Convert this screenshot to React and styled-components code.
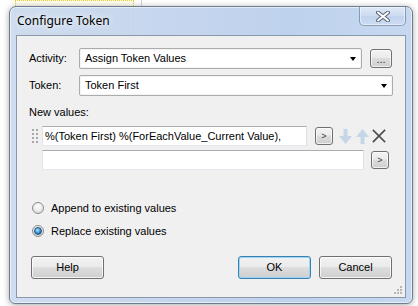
import React from 'react';
import styled, { createGlobalStyle } from 'styled-components';

const Global = createGlobalStyle`
  html, body { margin: 0; padding: 0; background: #fff; }
  body { width: 418px; height: 306px; overflow: hidden; font-family: "Liberation Sans", Arial, sans-serif; }
  * { box-sizing: border-box; }
`;

const Desktop = styled.div`
  position: relative;
  width: 418px;
  height: 306px;
  padding: 6px 0 0 9px;
  background: #fff;
`;

const BackdropSelection = styled.div`
  position: absolute;
  left: 15px;
  top: 0;
  width: 119px;
  height: 34px;
  border: 1px dotted #e3cf2a;
  background: #fffdf0;
`;

const BackdropLine = styled.div`
  position: absolute;
  left: 141px;
  top: 0;
  width: 1px;
  height: 7px;
  background: #d4d4d4;
`;

const Window = styled.div`
  position: relative;
  width: 404px;
  height: 298px;
  display: flex;
  flex-direction: column;
  border: 1px solid #6e7c8f;
  border-radius: 7px 7px 6px 6px;
  background: linear-gradient(90deg,
    rgba(200, 216, 239, 0.88) 0%,
    rgba(194, 211, 236, 0.92) 35%,
    rgba(188, 208, 236, 0.96) 70%,
    rgba(196, 215, 240, 0.96) 100%);
  box-shadow: 0 1px 6px rgba(0, 0, 0, 0.35), inset 0 0 0 1px rgba(255, 255, 255, 0.55);
  padding: 0 6px 5px 6px;
`;

const TitleBar = styled.div`
  height: 28px;
  display: flex;
  align-items: flex-start;
`;

const Title = styled.div`
  margin: 6px 0 0 1px;
  font: 12px/16px "Noto Sans", "Open Sans", sans-serif;
  color: #000;
  text-shadow: 0 0 6px rgba(255, 255, 255, 0.9), 0 0 10px rgba(255, 255, 255, 0.7);
`;

const CloseButton = styled.div`
  margin-left: auto;
  width: 47px;
  height: 19px;
  display: flex;
  align-items: center;
  justify-content: center;
  border: 1px solid rgba(80, 98, 125, 0.55);
  border-top: none;
  border-radius: 0 0 5px 5px;
  background: linear-gradient(#dfe9f6, #cbdbf0 50%, #c2d4ee 51%, #cbdcf2);
  box-shadow: inset 0 0 0 1px rgba(255, 255, 255, 0.45);
`;

const Client = styled.div`
  position: relative;
  flex: 1;
  display: flex;
  flex-direction: column;
  background: #f0f0f0;
  border: 1px solid #8b98aa;
  padding: 12px 12px 0 12px;
  font-size: 11px;
  color: #000;
`;

const FieldRow = styled.div`
  height: 21px;
  display: flex;
  align-items: center;
  margin-top: ${p => p.$top || 0}px;
`;

const Label = styled.div`
  width: 50px;
  flex: none;
  font-size: 11px;
  line-height: 13px;
`;

const SectionLabel = styled.div`
  margin-top: 10px;
  line-height: 13px;
  height: 13px;
`;

const Combo = styled.div`
  width: ${p => p.$width}px;
  height: 21px;
  flex: none;
  display: flex;
  align-items: center;
  padding: 0 4px 0 5px;
  background: #fff;
  border: 1px solid #acacac;
  border-radius: 2px;
  box-shadow: inset 0 0 0 1px #f4f4f4;
`;

const ComboText = styled.span`
  flex: 1;
  line-height: 13px;
`;

const ComboArrow = styled.span`
  width: 0;
  height: 0;
  border-left: 3.5px solid transparent;
  border-right: 3.5px solid transparent;
  border-top: 4px solid #000;
  margin-right: 1px;
`;

const SmallButton = styled.div`
  width: ${p => p.$w}px;
  height: ${p => p.$h}px;
  flex: none;
  margin-left: ${p => p.$gap}px;
  display: flex;
  align-items: ${p => (p.$low ? 'flex-end' : 'center')};
  justify-content: center;
  padding-bottom: ${p => (p.$low ? 3 : 0)}px;
  border: 1px solid #707070;
  border-radius: 3px;
  background: linear-gradient(#f2f2f2 0%, #ebebeb 45%, #dddddd 50%, #cfcfcf 100%);
  box-shadow: inset 0 0 0 1px rgba(255, 255, 255, 0.7);
  font-size: ${p => p.$fs || 9}px;
  line-height: 9px;
  font-weight: normal;
  color: #333;
`;

const ValueList = styled.div`
  margin-top: 7px;
  display: flex;
  flex-direction: column;
  gap: 4px;
`;

const ValueRow = styled.div`
  height: 20px;
  display: flex;
  align-items: center;
`;

const GripSlot = styled.div`
  width: 13px;
  height: 20px;
  flex: none;
  display: flex;
  align-items: center;
  padding-left: 3px;
`;

const TextField = styled.div`
  width: ${p => p.$width}px;
  height: 20px;
  flex: none;
  display: flex;
  align-items: center;
  padding-left: 2px;
  background: #fff;
  border: 1px solid;
  border-color: #abadb3 #dbdfe6 #e3e9ef #e2e3ea;
  border-radius: 1px;
  white-space: nowrap;
  overflow: hidden;
  line-height: 13px;
`;

const IconSlot = styled.div`
  flex: none;
  display: flex;
  align-items: center;
  margin-left: ${p => p.$gap}px;
`;

const RadioRow = styled.div`
  height: 16px;
  display: flex;
  align-items: center;
  margin-top: ${p => p.$top}px;
  padding-left: 3px;
  line-height: 13px;
`;

const RadioCircle = styled.span`
  width: 12px;
  height: 12px;
  flex: none;
  margin-right: 7px;
  border-radius: 50%;
  border: 1px solid #8a8c8f;
  background: radial-gradient(circle at 50% 35%, #ffffff 0%, #eeeeee 45%, #cfcfcf 100%);
  display: flex;
  align-items: center;
  justify-content: center;
  &::after {
    content: '';
    display: ${p => (p.$checked ? 'block' : 'none')};
    width: 6px;
    height: 6px;
    border-radius: 50%;
    border: 1px solid #1e4f7c;
    background: radial-gradient(circle at 40% 35%, #b5e6ff 0%, #3f94d6 50%, #134f86 100%);
  }
`;

const ButtonRow = styled.div`
  margin-top: 17px;
  display: flex;
  align-items: center;
`;

const PushButton = styled.div`
  width: 73px;
  height: 23px;
  flex: none;
  display: flex;
  align-items: center;
  justify-content: center;
  margin-left: ${p => p.$ml || 0};
  margin-right: ${p => p.$mr || 0}px;
  border: 1px solid ${p => (p.$default ? '#3c7fb1' : '#707070')};
  border-radius: 3px;
  background: linear-gradient(#f2f2f2 0%, #ebebeb 45%, #dddddd 50%, #cfcfcf 100%);
  box-shadow: inset 0 0 0 1px ${p => (p.$default ? '#9ad6f5' : 'rgba(255,255,255,0.75)')};
  font-size: 11px;
  line-height: 13px;
  color: #000;
`;

const ResizeGrip = styled.div`
  position: absolute;
  right: 2px;
  bottom: 2px;
  width: 9px;
  height: 9px;
  display: flex;
`;

const Grip = () => (
  <svg width="6" height="14" viewBox="0 0 6 14">
    {[0, 4, 8, 12].map(y =>
      [0, 4].map(x => <rect key={`${x}-${y}`} x={x} y={y} width="2" height="2" fill="#a8a8a8" />)
    )}
  </svg>
);

const DownArrow = () => (
  <svg width="13" height="15" viewBox="0 0 13 15">
    <polygon points="4.5,0 8.5,0 8.5,7 13,7 6.5,15 0,7 4.5,7" fill="#c6d5e7" />
  </svg>
);

const UpArrow = () => (
  <svg width="13" height="15" viewBox="0 0 13 15">
    <polygon points="6.5,0 13,8 8.5,8 8.5,15 4.5,15 4.5,8 0,8" fill="#c6d5e7" />
  </svg>
);

const RemoveIcon = () => (
  <svg width="14" height="14" viewBox="0 0 14 14">
    <path d="M1.5 1.5 L12.5 12.5 M12.5 1.5 L1.5 12.5" stroke="#4a4a4a" strokeWidth="1.7" strokeLinecap="square" />
  </svg>
);

const CloseGlyph = () => (
  <svg width="14" height="11" viewBox="0 0 14 11">
    <path d="M2 1.5 L12 9.5 M12 1.5 L2 9.5" stroke="#5b6676" strokeWidth="4" strokeLinecap="round" />
    <path d="M2 1.5 L12 9.5 M12 1.5 L2 9.5" stroke="#ffffff" strokeWidth="2" strokeLinecap="round" />
  </svg>
);

const ResizeDots = () => (
  <svg width="9" height="9" viewBox="0 0 9 9">
    {[[6, 0], [3, 3], [6, 3], [0, 6], [3, 6], [6, 6]].map(([x, y]) => (
      <rect key={`${x}-${y}`} x={x} y={y} width="2" height="2" fill="#b8b8b8" />
    ))}
  </svg>
);

export default function App() {
  return (
    <Desktop>
      <Global />
      <BackdropSelection />
      <BackdropLine />
      <Window>
        <TitleBar>
          <Title>Configure Token</Title>
          <CloseButton>
            <CloseGlyph />
          </CloseButton>
        </TitleBar>
        <Client>
          <FieldRow>
            <Label>Activity:</Label>
            <Combo $width={283}>
              <ComboText>Assign Token Values</ComboText>
              <ComboArrow />
            </Combo>
            <SmallButton $w={22} $h={19} $gap={8} $fs={11} $low>...</SmallButton>
          </FieldRow>
          <FieldRow $top={6}>
            <Label>Token:</Label>
            <Combo $width={314}>
              <ComboText>Token First</ComboText>
              <ComboArrow />
            </Combo>
          </FieldRow>
          <SectionLabel>New values:</SectionLabel>
          <ValueList>
            <ValueRow>
              <GripSlot>
                <Grip />
              </GripSlot>
              <TextField $width={265}>%(Token First) %(ForEachValue_Current Value),</TextField>
              <SmallButton $w={18} $h={18} $gap={8}>&gt;</SmallButton>
              <IconSlot $gap={6}>
                <DownArrow />
              </IconSlot>
              <IconSlot $gap={4}>
                <UpArrow />
              </IconSlot>
              <IconSlot $gap={3}>
                <RemoveIcon />
              </IconSlot>
            </ValueRow>
            <ValueRow>
              <GripSlot />
              <TextField $width={322} />
              <SmallButton $w={18} $h={18} $gap={7}>&gt;</SmallButton>
            </ValueRow>
          </ValueList>
          <RadioRow $top={30}>
            <RadioCircle />
            Append to existing values
          </RadioRow>
          <RadioRow $top={7}>
            <RadioCircle $checked />
            Replace existing values
          </RadioRow>
          <ButtonRow>
            <PushButton $ml="2px">Help</PushButton>
            <PushButton $ml="auto" $default>OK</PushButton>
            <PushButton $ml="8px" $mr={1}>Cancel</PushButton>
          </ButtonRow>
          <ResizeGrip>
            <ResizeDots />
          </ResizeGrip>
        </Client>
      </Window>
    </Desktop>
  );
}
